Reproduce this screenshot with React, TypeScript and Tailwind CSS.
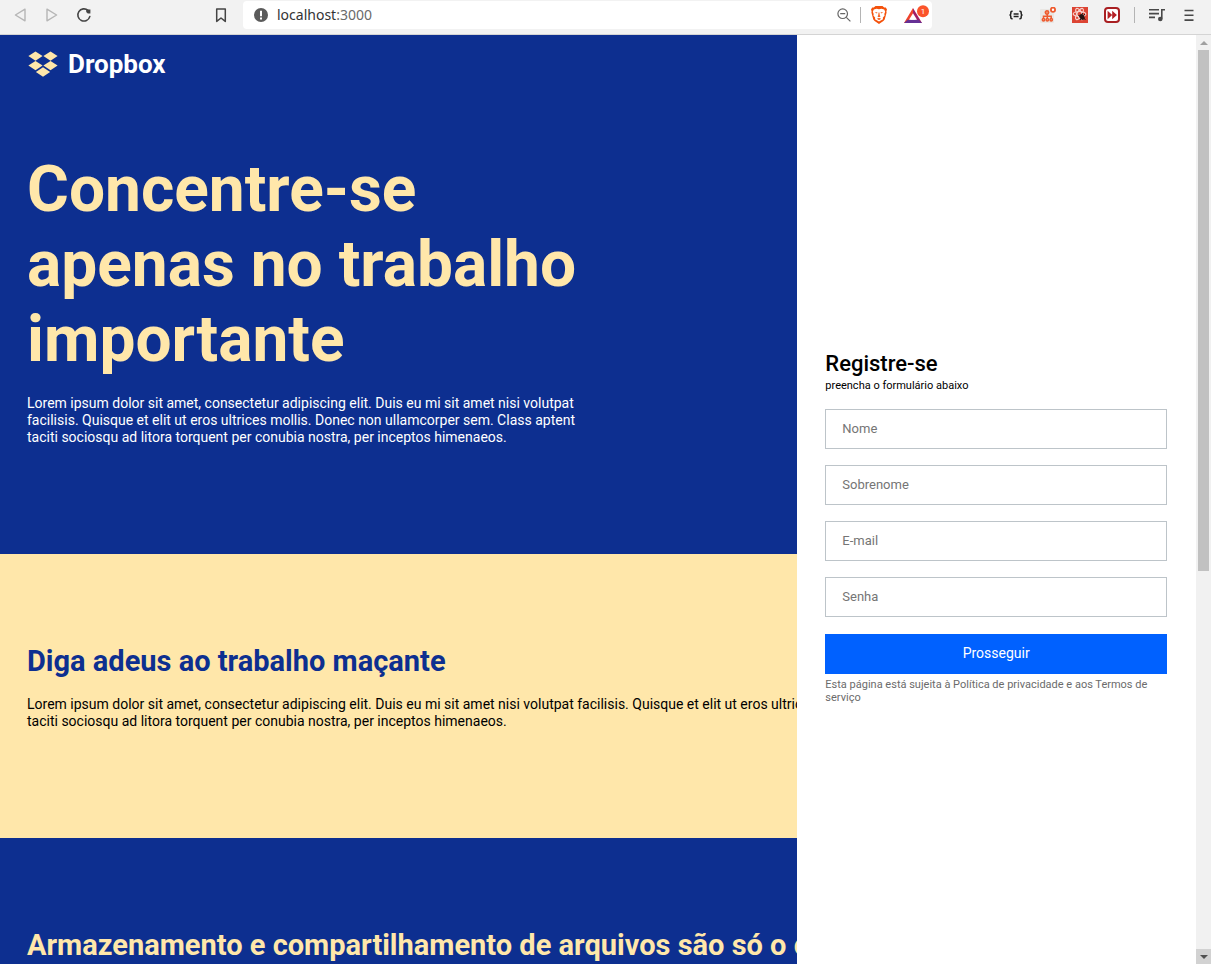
import React from "react";

function DropboxMark() {
  return (
    <svg viewBox="0 0 30 26" className="h-[26px] w-[30px] shrink-0" fill="#ffe7aa" aria-hidden="true">
      <path d="M7.500 0.500 14.600 5.100 7.500 9.700 0.400 5.100Z" />
      <path d="M22.500 0.500 29.600 5.100 22.500 9.700 15.400 5.100Z" />
      <path d="M7.500 10 14.600 14.600 7.500 19.200 0.400 14.600Z" />
      <path d="M22.500 10 29.600 14.600 22.500 19.200 15.400 14.600Z" />
      <path d="M15 16.300 22.100 20.900 15 25.700 7.900 20.900Z" />
    </svg>
  );
}

function Divider() {
  return <span className="h-4 w-px bg-[#b4b4b4]" />;
}

function Toolbar() {
  return (
    <header className="flex h-[35px] shrink-0 items-start border-b border-[#d4d4d4] bg-[#f2f2f2] pr-[14px] pl-3">
      <nav className="flex h-[30px] w-[231px] shrink-0 items-center">
        <button aria-label="Voltar" className="mr-4 h-4 w-4">
          <svg viewBox="0 0 16 16" fill="none" stroke="#b6b6b6" strokeWidth="1.4" strokeLinejoin="round">
            <path d="M13 2.2v11.6L3.400 8Z" />
          </svg>
        </button>
        <button aria-label="Avançar" className="mr-4 h-4 w-4">
          <svg viewBox="0 0 16 16" fill="none" stroke="#b6b6b6" strokeWidth="1.4" strokeLinejoin="round">
            <path d="M3 2.2v11.6L12.600 8Z" />
          </svg>
        </button>
        <button aria-label="Recarregar" className="h-4 w-4">
          <svg viewBox="0 0 16 16" fill="none" stroke="#444" strokeWidth="1.6" strokeLinecap="round">
            <path d="M13.800 9.600A6.100 6.100 0 1 1 12 3.400" />
            <path d="M10.200 2.400h4.200v4.200h-2.600L10.200 5Z" fill="#444" stroke="none" />
          </svg>
        </button>
        <button aria-label="Adicionar favorito" className="mr-3 ml-auto h-5 w-5">
          <svg viewBox="0 0 20 20" fill="none" stroke="#444" strokeWidth="1.5" strokeLinejoin="round">
            <path d="M5.700 4h8.600v12.400L10 13l-4.300 3.400Z" />
          </svg>
        </button>
      </nav>
      <div className="mt-px flex h-7 min-w-0 flex-1 items-center rounded bg-white pr-[2px] pl-[11px]">
        <svg viewBox="0 0 14 14" className="mr-[9px] h-[14px] w-[14px] shrink-0" aria-hidden="true">
          <circle cx="7" cy="7" r="7" fill="#5a5a5a" />
          <path d="M6 2.800h2v5.400H6ZM6 9.400h2v2H6Z" fill="#fff" />
        </svg>
        <a href="#inicio" className="font-['Noto_Sans',sans-serif] text-[14px] leading-5 text-[#333]">
          localhost<span className="text-[#6a6a6a]">:3000</span>
        </a>
        <button aria-label="Zoom" className="ml-auto h-[14px] w-[14px]">
          <svg viewBox="0 0 14 14" fill="none" stroke="#666" strokeWidth="1.2">
            <circle cx="5.700" cy="5.700" r="4.800" />
            <path d="M9.300 9.300 13.400 13.400M3.200 5.700h5" />
          </svg>
        </button>
        <span className="ml-[9px] flex"><Divider /></span>
        <button aria-label="Brave Shields" className="ml-[9px] h-[18px] w-[18px]">
          <svg viewBox="0 0 18 18">
            <path d="M5.500 0h7l1.700 1.600 1.600-.1L17 3.400l-.6 1.900.2 1.300-1.900 6.900-1.300 1.500L9 18l-4.400-3-1.300-1.500-1.900-6.900.2-1.300L1 3.400l1.200-1.900 1.600.1Z" fill="#f4510b" />
            <path d="m9 3.300 2.300-.5 2.900.8 1 2.200-.9 2.300.3 1.400-1.800 2.300.2 1.500L9 15.600l-4-2.300.2-1.500-1.800-2.300.3-1.400-.9-2.300 1-2.200 2.900-.8Z" fill="#fff" />
            <path d="m4.600 6 2.900.6-.6 1ZM13.400 6l-2.900.6.6 1ZM8.600 6.600h.8l.3 3 .9.600L9 11.200l-1.600-1 .9-.6ZM6.800 12.700 9 12l2.200.7L9 13.900Z" fill="#f4510b" />
          </svg>
        </button>
        <button aria-label="Brave Rewards" className="ml-4 h-5 w-[26px]">
          <svg viewBox="0 0 26 20">
            <path d="M9 3 0 18h4.600L9 9.500Z" fill="#f0442c" />
            <path d="M9 3v6.500l4.400 8.500H18Z" fill="#a01f66" />
            <path d="m0 18 3.700-3.300h10.600L18 18Z" fill="#653094" />
            <path d="m9 8.200 4 6.500H5Z" fill="#fff" />
            <circle cx="19" cy="6.200" r="6" fill="#fb542b" />
            <text x="19" y="9" textAnchor="middle" fontSize="8" fill="#fff" fontFamily="Roboto, sans-serif">1</text>
          </svg>
        </button>
      </div>
      <div className="ml-[76px] flex h-[30px] shrink-0 items-center">
        <button aria-label="JSON" className="h-4 w-4">
          <svg viewBox="0 0 16 16" fill="none" stroke="#222" strokeWidth="1.500">
            <path d="M4.600 4.200H4q-1.200 0-1.200 1.200v1.400Q2.800 8 1.500 8q1.300 0 1.300 1.200v1.400q0 1.200 1.200 1.200h.6M11.400 4.200h.6q1.200 0 1.200 1.200v1.400q0 1.200 1.300 1.200-1.300 0-1.300 1.200v1.400q0 1.200-1.200 1.200h-.6" />
            <path d="M5.600 7h5M5.600 9.500h5" strokeWidth="1.300" />
          </svg>
        </button>
        <button aria-label="Mapa do site" className="ml-4 h-4 w-4">
          <svg viewBox="0 0 16 16">
            <rect y="2" width="14" height="14" rx="1" fill="#e9e6e3" />
            <g fill="none" stroke="#ee5a2e" strokeWidth="1.500">
              <circle cx="7" cy="5.500" r="1.700" fill="#f0926c" />
              <circle cx="3.500" cy="12.800" r="1.200" />
              <circle cx="7.300" cy="12.800" r="1.200" />
              <circle cx="11.200" cy="12.800" r="1.200" />
              <path d="M7.300 7v4M3.500 11V9.300h7.700V11" />
              <circle cx="13" cy="2.700" r="2.100" fill="#fff" strokeWidth="1.800" />
            </g>
          </svg>
        </button>
        <button aria-label="React" className="ml-4 h-4 w-4">
          <svg viewBox="0 0 16 16">
            <path d="M0 0h16v16H0Z" fill="#dc4433" />
            <g fill="none" stroke="#f7d3ce" strokeWidth="1.200">
              <ellipse cx="7.500" cy="7" rx="6.300" ry="2.500" />
              <ellipse cx="7.500" cy="7" rx="6.300" ry="2.500" transform="rotate(60 7.500 7)" />
              <ellipse cx="7.500" cy="7" rx="6.300" ry="2.500" transform="rotate(120 7.500 7)" />
            </g>
            <ellipse cx="10" cy="10" rx="2.300" ry="3.200" transform="rotate(-35 10 10)" fill="#241312" />
            <path d="m6.500 8.500 7 4M13 7l-5 6M10.500 6l-.5 2" stroke="#241312" />
          </svg>
        </button>
        <button aria-label="Avanço rápido" className="ml-4 h-4 w-4">
          <svg viewBox="0 0 16 16">
            <rect x="1" y="1" width="14" height="14" rx="3" fill="#fff" stroke="#a91f22" strokeWidth="2" />
            <path d="M3.600 3.800 8.200 8l-4.600 4.200ZM8.200 3.800 12.900 8l-4.700 4.200Z" fill="#b51f24" />
          </svg>
        </button>
        <span className="mr-[14px] ml-[14px] flex"><Divider /></span>
        <button aria-label="Mídia" className="h-4 w-4">
          <svg viewBox="0 0 16 16" fill="none" stroke="#484848" strokeWidth="1.600">
            <path d="M0 2.800h10M0 6.600h10M0 10.400h6M16 2.800h-3.200v9" />
            <circle cx="11.300" cy="12" r="2.300" fill="#484848" stroke="none" />
          </svg>
        </button>
        <button aria-label="Menu" className="ml-4 h-4 w-4">
          <svg viewBox="0 0 16 16" fill="none" stroke="#484848" strokeWidth="1.600">
            <path d="M3.500 3.500h9M3.500 8.300h9M3.500 13.100h9" />
          </svg>
        </button>
      </div>
    </header>
  );
}

function Field({ id, label, type = "text" }: { id: string; label: string; type?: string }) {
  return (
    <input
      id={id}
      name={id}
      type={type}
      aria-label={label}
      placeholder={label}
      className="h-10 w-full border border-[#bdc4c9] bg-white px-4 text-[13px] text-black placeholder:text-[#757575] focus:outline-none"
    />
  );
}

function SignUp() {
  return (
    <aside className="flex min-w-0 flex-col justify-center bg-white pr-[29px] pl-7">
      <form className="flex flex-col pt-[55px]" onSubmit={(e) => e.preventDefault()}>
        <h2 className="text-[22px] leading-[26px] font-medium">Registre-se</h2>
        <p className="mt-[2px] text-[11px] leading-[13px]">preencha o formulário abaixo</p>
        <div className="mt-[17px] flex flex-col gap-4">
          <Field id="nome" label="Nome" />
          <Field id="sobrenome" label="Sobrenome" />
          <Field id="email" label="E-mail" type="email" />
          <Field id="senha" label="Senha" type="password" />
        </div>
        <button type="submit" className="mt-[17px] h-10 w-full bg-[#0061ff] text-[14px] text-white">
          Prosseguir
        </button>
        <p className="mt-1 text-[11px] leading-[13px] text-[#6b6b6b]">
          Esta página está sujeita à Política de privacidade e aos Termos de serviço
        </p>
      </form>
    </aside>
  );
}

function Scrollbar() {
  return (
    <div className="flex w-[15px] shrink-0 flex-col bg-[#f1f1f1]" aria-hidden="true">
      <div className="flex h-[15px] items-center justify-center">
        <svg viewBox="0 0 8 4" className="h-1 w-2"><path d="M4 0 8 4H0Z" fill="#a0a0a0" /></svg>
      </div>
      <div className="min-h-0 flex-1 px-[2px]">
        <div className="h-[58%] bg-[#c1c1c1]" />
      </div>
      <div className="flex h-[15px] items-center justify-center bg-[#d2d2d2]">
        <svg viewBox="0 0 8 4" className="h-1 w-2"><path d="M0 0h8L4 4Z" fill="#505050" /></svg>
      </div>
    </div>
  );
}

export default function App() {
  return (
    <div className="flex h-screen flex-col overflow-hidden font-[Roboto,sans-serif] text-black">
      <Toolbar />
      <div className="flex min-h-0 flex-1">
        <div className="grid min-w-0 flex-1 grid-cols-[2fr_1fr]">
          <main className="min-h-0 min-w-0 overflow-hidden">
            <section id="inicio" className="bg-[#0d2f90] px-[27px] pt-[14px] pb-[108px]">
              <div className="flex items-center gap-[10px] pl-px">
                <DropboxMark />
                <span className="text-[26px] leading-[30px] font-bold text-white">Dropbox</span>
              </div>
              <h1 className="mt-[73px] max-w-[580px] text-[64px] leading-[75px] font-bold text-[#ffe7aa]">
                Concentre-se apenas no trabalho importante
              </h1>
              <p className="mt-[18px] max-w-[560px] text-[14px] leading-[17px] text-white">
                Lorem ipsum dolor sit amet, consectetur adipiscing elit. Duis eu mi sit amet nisi volutpat facilisis. Quisque et elit ut eros ultrices mollis. Donec non ullamcorper sem. Class aptent taciti sociosqu ad litora torquent per conubia nostra, per inceptos himenaeos.
              </p>
            </section>
            <section className="bg-[#ffe7aa] px-[27px] pt-[90px] pb-[108px] whitespace-nowrap">
              <h2 className="text-[29px] leading-[34px] font-bold text-[#0d2f90]">Diga adeus ao trabalho maçante</h2>
              <p className="mt-[18px] text-[14px] leading-[17px]">
                Lorem ipsum dolor sit amet, consectetur adipiscing elit. Duis eu mi sit amet nisi volutpat facilisis. Quisque et elit ut eros ultrices mollis. Donec non ullamcorper sem. Class aptent
                <br />
                taciti sociosqu ad litora torquent per conubia nostra, per inceptos himenaeos.
              </p>
            </section>
            <section className="bg-[#0d2f90] px-[27px] pt-[90px] pb-[108px] whitespace-nowrap">
              <h2 className="text-[29px] leading-[34px] font-bold text-[#ffe7aa]">
                Armazenamento e compartilhamento de arquivos são só o começo
              </h2>
            </section>
          </main>
          <SignUp />
        </div>
        <Scrollbar />
      </div>
    </div>
  );
}
